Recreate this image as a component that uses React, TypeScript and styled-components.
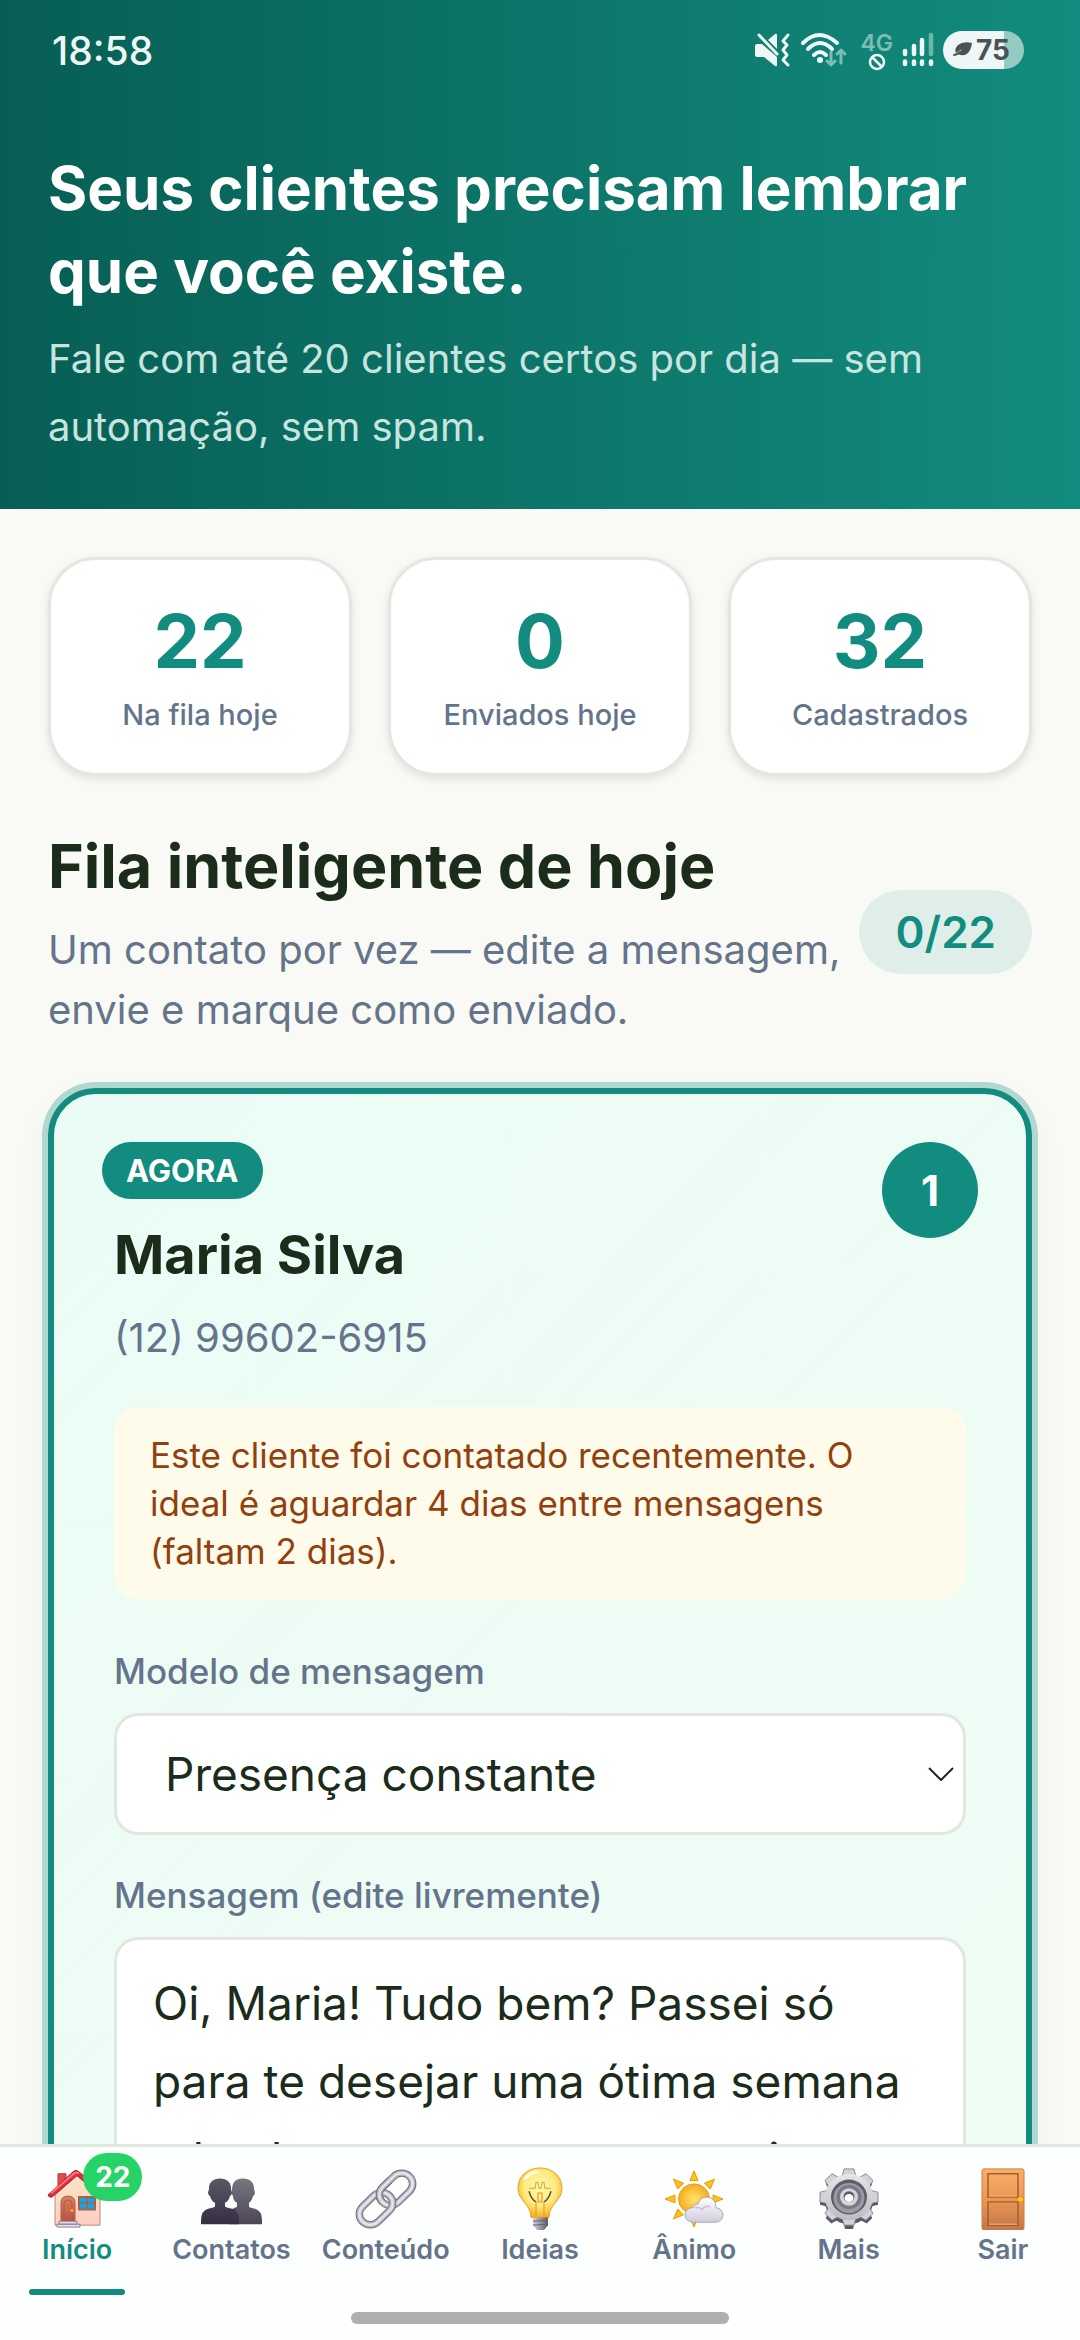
import { useState } from 'react'
import styled, { createGlobalStyle } from 'styled-components'

const GlobalStyle = createGlobalStyle`
    * {
        box-sizing: border-box;
    }

    body {
        margin: 0;
        background: #f9faf5;
        color: #1b2c1b;
        font-family: Inter, Roboto, "Liberation Sans", sans-serif;
        font-size: 40px;
    }

    h1, h2, h3, p {
        margin: 0;
    }
`

const STATS = [
    { value: '22', label: 'Na fila hoje' },
    { value: '0', label: 'Enviados hoje' },
    { value: '32', label: 'Cadastrados' },
]

const TABS = [
    { label: 'Início', icon: <HouseIcon />, active: true, badge: 22 },
    { label: 'Contatos', icon: <PeopleIcon /> },
    { label: 'Conteúdo', icon: <LinkIcon /> },
    { label: 'Ideias', icon: <BulbIcon /> },
    { label: 'Ânimo', icon: <SunIcon /> },
    { label: 'Mais', icon: <GearIcon /> },
    { label: 'Sair', icon: <DoorIcon /> },
]

const App = () => {
    const [message, setMessage] = useState(
        'Oi, Maria! Tudo bem? Passei só para te desejar uma ótima semana e lembrar que estou por aqui.'
    )

    return (
        <Screen>
            <GlobalStyle />
            <Scroll>
                <Header>
                    <StatusBar>
                        <Clock>18:58</Clock>
                        <StatusIcons />
                    </StatusBar>
                    <Title>Seus clientes precisam lembrar que você existe.</Title>
                    <Subtitle>Fale com até 20 clientes certos por dia — sem automação, sem spam.</Subtitle>
                </Header>
                <Main>
                    <Stats>
                        {STATS.map((stat) => (
                            <StatCard key={stat.label}>
                                <StatValue>{stat.value}</StatValue>
                                <StatLabel>{stat.label}</StatLabel>
                            </StatCard>
                        ))}
                    </Stats>
                    <QueueHeader>
                        <QueueText>
                            <QueueTitle>Fila inteligente de hoje</QueueTitle>
                            <QueueHint>Um contato por vez — edite a mensagem, envie e marque como enviado.</QueueHint>
                        </QueueText>
                        <Progress>0/22</Progress>
                    </QueueHeader>
                    <ContactCard>
                        <CardTop>
                            <div>
                                <NowBadge>AGORA</NowBadge>
                                <ContactName>Maria Silva</ContactName>
                                <ContactPhone>(12) 99602-6915</ContactPhone>
                            </div>
                            <Position>1</Position>
                        </CardTop>
                        <CardBody>
                            <Warning>
                                Este cliente foi contatado recentemente. O ideal é aguardar 4 dias entre mensagens (faltam 2 dias).
                            </Warning>
                            <Label htmlFor="modelo">Modelo de mensagem</Label>
                            <SelectWrapper>
                                <Select id="modelo">
                                    <option>Presença constante</option>
                                </Select>
                                <Chevron viewBox="0 0 26 14">
                                    <path d="M1 1L13 13L25 1" fill="none" stroke="#1b2c1b" strokeWidth="2" />
                                </Chevron>
                            </SelectWrapper>
                            <Label htmlFor="mensagem">Mensagem (edite livremente)</Label>
                            <Message id="mensagem" value={message} onChange={(e) => setMessage(e.target.value)} />
                        </CardBody>
                    </ContactCard>
                </Main>
            </Scroll>
            <BottomNav>
                <Tabs>
                    {TABS.map((tab) => (
                        <Tab key={tab.label} href="#" $active={tab.active}>
                            <IconBox>
                                {tab.icon}
                                {tab.badge && <Badge>{tab.badge}</Badge>}
                            </IconBox>
                            <TabLabel>{tab.label}</TabLabel>
                            <TabLine $active={tab.active} />
                        </Tab>
                    ))}
                </Tabs>
                <HomeHandle />
            </BottomNav>
        </Screen>
    )
}

export default App

function StatusIcons() {
    return (
        <StatusGroup>
            <svg width="36" height="36" viewBox="0 0 36 36">
                <path d="M2 12H7L22 25V33Q22 35 20 34L9 25H2Q0 25 0 23V14Q0 12 2 12Z" fill="#eef7f5" />
                <path d="M13 8L20 2Q22 1 22 3V17Z" fill="#eef7f5" />
                <path d="M4 3L22 22" stroke="#eef7f5" strokeWidth="3" strokeLinecap="round" />
                <path d="M33 3L28 9L32 13L28 18L32 23L28 28L33 33" fill="none" stroke="#eef7f5" strokeWidth="3" strokeLinecap="round" strokeLinejoin="round" />
            </svg>
            <svg width="48" height="36" viewBox="0 0 48 36">
                <g fill="none" stroke="#eef7f5" strokeWidth="4" strokeLinecap="round">
                    <path d="M3 11Q19 -5 37 11" />
                    <path d="M8 17Q20 5 32 17" />
                    <path d="M14 23Q20 17 26 23" />
                </g>
                <circle cx="20" cy="28" r="3" fill="#eef7f5" />
                <g fill="none" stroke="#7dbcb2" strokeWidth="3" strokeLinecap="round" strokeLinejoin="round">
                    <path d="M31 20V33M27 29L31 33L35 29" />
                    <path d="M41 31V18M37 22L41 18L45 22" />
                </g>
            </svg>
            <Network>
                4G
                <svg width="18" height="18" viewBox="0 0 18 18">
                    <circle cx="9" cy="9" r="7" fill="none" stroke="#eef7f5" strokeWidth="2.5" />
                    <path d="M4 4L14 14" stroke="#eef7f5" strokeWidth="2.5" />
                </svg>
            </Network>
            <svg width="32" height="36" viewBox="0 0 32 36">
                <g stroke="#eef7f5" strokeWidth="4.5" strokeLinecap="round">
                    <path d="M3 19V22M12 14V22M20 8V22" />
                    <path d="M29 3V22" stroke="#6db5aa" />
                    <path d="M3 29.500V32M12 29.500V32M20 29.500V32M29 29.500V32" />
                </g>
            </svg>
            <Battery>
                <svg width="20" height="16" viewBox="0 0 20 16">
                    <path d="M19 1Q10 -1 5 3Q1 7 3 11L9 7L5 12Q11 15 15 11Q18 8 19 1Z" fill="#4a5253" />
                    <path d="M1 13Q4 13 7 10" fill="none" stroke="#4a5253" strokeWidth="2" strokeLinecap="round" />
                </svg>
                75
            </Battery>
        </StatusGroup>
    )
}

function HouseIcon() {
    return (
        <TabIcon viewBox="0 0 64 66" preserveAspectRatio="none">
            <defs>
                <linearGradient id="wall" x2="0" y2="1">
                    <stop stopColor="#f7e4c8" />
                    <stop offset="1" stopColor="#ffcfc0" />
                </linearGradient>
                <linearGradient id="door" x2="0" y2="1">
                    <stop stopColor="#d98262" />
                    <stop offset="1" stopColor="#b9533f" />
                </linearGradient>
            </defs>
            <path d="M13 8H21V24H13Z" fill="#e84850" stroke="#b3333a" />
            <path d="M10 30L32 9L55 30V61H10Z" fill="url(#wall)" stroke="#b98a72" />
            <path d="M3 30Q4 33 7 32L32 10L57 32Q60 33 61 30L34 6Q31 3 28 6Z" fill="#e02f3b" stroke="#a81f29" strokeLinejoin="round" />
            <path d="M6 28L30 7L34 7" fill="none" stroke="#ff7379" strokeWidth="2" />
            <path d="M16 57V38Q16 31 23 31Q30 31 30 38V57Z" fill="url(#door)" stroke="#a7604b" />
            <path d="M19 55V39Q19 35 23 35Q27 35 27 39V55Z" fill="none" stroke="#b9533f" />
            <circle cx="27" cy="46" r="1.5" fill="#ffb52e" />
            <path d="M34 32H50V45H34Z" fill="#16a5dc" stroke="#a7604b" strokeWidth="2" />
            <path d="M42 32V45M34 38H50" stroke="#a7604b" strokeWidth="1.5" />
            <path d="M14 57H32V60H14ZM12 60H35V63H12Z" fill="#e6e0ee" stroke="#8f7d94" />
        </TabIcon>
    )
}

function PeopleIcon() {
    return (
        <TabIcon viewBox="0 0 64 66" preserveAspectRatio="none">
            <defs>
                <linearGradient id="back" x2="0" y2="1">
                    <stop stopColor="#77777f" />
                    <stop offset="1" stopColor="#4c4558" />
                </linearGradient>
                <linearGradient id="front" x2="0" y2="1">
                    <stop stopColor="#5a5864" />
                    <stop offset="1" stopColor="#352e43" />
                </linearGradient>
            </defs>
            <path
                d="M44 13C51 13 55 17 55 23Q55 25 56 27Q56 30 54 31Q53 36 50 38V42Q51 43 56 44Q63 46 63 56V60H30V46L38 42V38Q34 36 34 31Q32 29 33 26C33 17 36 13 44 13Z"
                fill="url(#back)"
            />
            <path
                d="M21 13C28 13 32 17 32 23Q32 25 33 27Q33 30 31 31Q30 36 26 38V42Q28 43 33 44Q40 46 40 56V60H2V56Q2 46 9 44Q14 43 16 42V38Q12 36 11 31Q9 30 9 27Q10 25 10 23C10 17 14 13 21 13Z"
                fill="url(#front)"
            />
        </TabIcon>
    )
}

function LinkIcon() {
    const ring = 'M-11 -8A11 11 0 0 1 11 -8V8A11 11 0 0 1 -11 8Z'
    const overlap = 'M-11 -2V8A11 11 0 0 0 -3 18.600'
    const layers = [
        { stroke: '#70707c', strokeWidth: 7.5 },
        { stroke: '#b4b4c0', strokeWidth: 5.5 },
        { stroke: '#e6e6ec', strokeWidth: 2.5 },
    ]

    return (
        <TabIcon viewBox="0 0 64 66" preserveAspectRatio="none">
            <g fill="none">
                <g transform="translate(42 24) rotate(45)">
                    {layers.map((layer) => (
                        <path key={layer.stroke} d={ring} {...layer} />
                    ))}
                </g>
                <g transform="translate(22 44) rotate(45)">
                    {layers.map((layer) => (
                        <path key={layer.stroke} d={ring} {...layer} />
                    ))}
                </g>
                <g transform="translate(42 24) rotate(45)">
                    {layers.map((layer) => (
                        <path key={layer.stroke} d={overlap} {...layer} />
                    ))}
                </g>
            </g>
        </TabIcon>
    )
}

function BulbIcon() {
    return (
        <TabIcon viewBox="0 0 64 66" preserveAspectRatio="none">
            <defs>
                <radialGradient id="glass" cx="0.5" cy="0.4" r="0.6">
                    <stop stopColor="#fff9b0" />
                    <stop offset="0.6" stopColor="#ffea80" />
                    <stop offset="1" stopColor="#f7ae18" />
                </radialGradient>
                <linearGradient id="socket">
                    <stop stopColor="#d5d3dc" />
                    <stop offset="1" stopColor="#5b5867" />
                </linearGradient>
            </defs>
            <path d="M32 2C45 2 54 11 54 23C54 36 41 39 41 53H23C23 39 10 36 10 23C10 11 19 2 32 2Z" fill="url(#glass)" stroke="#ed9c16" />
            <path d="M21 26Q23 34 28 37M43 26Q41 34 36 37" fill="none" stroke="#5f5738" strokeWidth="1.5" />
            <path d="M28 37V52M36 37V52M30 28H34V37H30Z" fill="none" stroke="#e0a52a" strokeWidth="1.3" />
            <path d="M21 23H27L28 17H30L31 23L33 23L34 17H36L37 23H43" fill="none" stroke="#dcb84a" strokeWidth="1.3" />
            <path d="M17 13Q22 7 29 6" stroke="#fffce0" strokeWidth="3" strokeLinecap="round" fill="none" />
            <path d="M25 53H40V61L36 66H29L25 61Z" fill="url(#socket)" />
            <path d="M25 57L40 56M25 61L40 60" stroke="#656270" />
        </TabIcon>
    )
}

function SunIcon() {
    return (
        <TabIcon viewBox="0 0 64 66" preserveAspectRatio="none">
            <defs>
                <radialGradient id="sun">
                    <stop stopColor="#ffe36e" />
                    <stop offset="1" stopColor="#f5ac1e" />
                </radialGradient>
                <linearGradient id="cloud" x2="0" y2="1">
                    <stop stopColor="#fff" />
                    <stop offset="1" stopColor="#cfcddd" />
                </linearGradient>
            </defs>
            <g fill="#ffc30f" stroke="#e79a0b">
                {[0, 45, 90, 180, 225, 270, 315].map((angle) => (
                    <path key={angle} d="M32 5L36 15H28Z" transform={`rotate(${angle} 32 34)`} strokeLinejoin="round" />
                ))}
            </g>
            <circle cx="32" cy="34" r="15.5" fill="url(#sun)" stroke="#ee9c15" />
            <path d="M31 58Q23 57 23 50Q24 43 31 43Q32 39 36 39Q38 32 45 32Q54 33 54 43Q61 44 61 51Q60 58 53 58Z" fill="url(#cloud)" stroke="#a9a6bc" />
            <path d="M33 43Q38 42 40 45Q43 40 48 42" fill="none" stroke="#c3c1d2" strokeWidth="1.5" />
        </TabIcon>
    )
}

function GearIcon() {
    const teeth = [0, 45, 90, 135, 180, 225, 270, 315]

    return (
        <TabIcon viewBox="0 0 64 66" preserveAspectRatio="none">
            <defs>
                <linearGradient id="gear" x2="0" y2="1">
                    <stop stopColor="#e6e6e8" />
                    <stop offset="1" stopColor="#bdbbc5" />
                </linearGradient>
            </defs>
            <g fill="#5b5866">
                <circle cx="32" cy="36" r="24" />
                {teeth.map((angle) => (
                    <path key={angle} d="M26 15L28 7H36L38 15Z" transform={`rotate(${angle} 32 36)`} />
                ))}
            </g>
            <g fill="#d2d2d7" stroke="#77757f" strokeWidth="0.8" strokeLinejoin="round">
                {teeth.map((angle) => (
                    <path key={angle} d="M25 11L27 3H37L39 11Z" transform={`rotate(${angle} 32 32)`} />
                ))}
            </g>
            <circle cx="32" cy="32" r="24" fill="url(#gear)" />
            <circle cx="32" cy="32" r="18" fill="#5d5e68" />
            <circle cx="32" cy="33" r="15.5" fill="#9a9ba5" />
            <circle cx="32" cy="32" r="12.5" fill="#777984" />
            <circle cx="32" cy="32" r="9" fill="#d4d4d9" />
            <circle cx="32" cy="31.5" r="5.5" fill="#5b5c65" />
            <ellipse cx="32" cy="33" rx="4.5" ry="4" fill="#fff" />
        </TabIcon>
    )
}

function DoorIcon() {
    return (
        <TabIcon viewBox="0 0 64 66" preserveAspectRatio="none">
            <defs>
                <linearGradient id="wood" x2="0" y2="1">
                    <stop stopColor="#f9ae6b" />
                    <stop offset="0.5" stopColor="#eb9754" />
                    <stop offset="1" stopColor="#c3764b" />
                </linearGradient>
            </defs>
            <rect x="11" y="3" width="42" height="63" rx="2" fill="url(#wood)" stroke="#c97c45" />
            <path d="M17 8H47V32H17ZM17 37H47V61H17Z" fill="none" stroke="#a45f28" strokeWidth="1.5" />
            <path d="M18 31H46M18 60H46" stroke="#ffb982" />
            <circle cx="49.5" cy="34.5" r="3" fill="#ffc629" stroke="#d68d12" />
        </TabIcon>
    )
}

const Screen = styled.div`
    display: flex;
    flex-direction: column;
    height: 100vh;
`

const Scroll = styled.div`
    flex: 1;
    min-height: 0;
    overflow-y: auto;
    scrollbar-width: none;
`

const Header = styled.header`
    padding: 0 48px 48px;
    background: linear-gradient(90deg, #075e54, #128c7e);
    color: #ffffff;
`

const StatusBar = styled.div`
    display: flex;
    align-items: center;
    justify-content: space-between;
    height: 100px;
    margin-bottom: 47px;
    padding: 0 8px 0 4px;
    color: #eef7f5;
`

const Clock = styled.time`
    font-size: 39px;
    font-weight: 500;
`

const StatusGroup = styled.div`
    display: flex;
    align-items: center;
    gap: 9px;
`

const Network = styled.div`
    display: flex;
    flex-direction: column;
    align-items: center;
    margin-left: 4px;
    padding-top: 4px;
    color: #7dbcb2;
    font-size: 23px;
    font-weight: 600;
    line-height: 20px;
`

const Battery = styled.div`
    display: flex;
    align-items: center;
    gap: 3px;
    height: 38px;
    padding: 0 14px 0 10px;
    border-radius: 19px;
    background: linear-gradient(90deg, #eef7f5 75%, #94cbc3 75%);
    color: #4a5253;
    font-size: 28px;
    font-weight: 700;
`

const Title = styled.h1`
    font-size: 60px;
    font-weight: 700;
    line-height: 83px;
`

const Subtitle = styled.p`
    margin-top: 12px;
    color: #c8e4df;
    line-height: 68px;
`

const Main = styled.main`
    padding: 48px;
`

const Stats = styled.section`
    display: grid;
    grid-template-columns: repeat(3, 1fr);
    gap: 36px;
`

const StatCard = styled.div`
    padding: 36px 12px;
    border: 3px solid #e2e8e0;
    border-radius: 48px;
    background: #ffffff;
    box-shadow: 0 3px 9px rgba(0, 0, 0, 0.1);
    text-align: center;
`

const StatValue = styled.div`
    color: #128c7e;
    font-size: 74px;
    font-weight: 700;
    line-height: 90px;
`

const StatLabel = styled.div`
    margin-top: 6px;
    color: #64748b;
    font-size: 29px;
    font-weight: 500;
    line-height: 45px;
`

const QueueHeader = styled.div`
    display: flex;
    align-items: center;
    justify-content: space-between;
    margin: 48px 0;
`

const QueueText = styled.div`
    flex: 1;
`

const QueueTitle = styled.h2`
    font-size: 61px;
    font-weight: 700;
    line-height: 84px;
`

const QueueHint = styled.p`
    margin-top: 12px;
    color: #64748b;
    line-height: 60px;
`

const Progress = styled.span`
    padding: 12px 36px;
    border-radius: 42px;
    background: #e0eee9;
    color: #128c7e;
    font-size: 44px;
    font-weight: 600;
    line-height: 60px;
`

const ContactCard = styled.article`
    padding: 48px;
    border: 6px solid #128c7e;
    border-radius: 48px;
    background: linear-gradient(135deg, #ebfcf6, #effdf4);
    box-shadow: 0 0 0 6px #b0d8d0, 0 12px 36px rgba(0, 0, 0, 0.06);
`

const CardTop = styled.div`
    display: flex;
    align-items: flex-start;
    justify-content: space-between;
`

const NowBadge = styled.span`
    display: block;
    width: fit-content;
    padding: 6px 24px;
    border-radius: 29px;
    background: #128c7e;
    color: #ffffff;
    font-size: 31px;
    font-weight: 700;
    line-height: 45px;
`

const ContactName = styled.h3`
    margin: 18px 12px 0;
    font-size: 54px;
    font-weight: 700;
    line-height: 76px;
`

const ContactPhone = styled.p`
    margin: 12px 12px 0;
    color: #64748b;
    line-height: 66px;
`

const Position = styled.span`
    display: flex;
    align-items: center;
    justify-content: center;
    width: 96px;
    height: 96px;
    border-radius: 50%;
    background: #128c7e;
    color: #ffffff;
    font-size: 42px;
    font-weight: 700;
`

const CardBody = styled.div`
    padding: 36px 12px 0;
`

const Warning = styled.p`
    margin-bottom: 48px;
    padding: 24px 36px;
    border-radius: 24px;
    background: #fffbeb;
    color: #92400e;
    font-size: 35px;
    line-height: 48px;
`

const Label = styled.label`
    display: block;
    margin-bottom: 18px;
    color: #64748b;
    font-size: 35px;
    font-weight: 500;
    line-height: 48px;
`

const SelectWrapper = styled.div`
    position: relative;
    margin-bottom: 36px;
`

const Select = styled.select`
    display: block;
    width: 100%;
    height: 122px;
    padding: 0 48px;
    appearance: none;
    border: 3px solid #e2e8e0;
    border-radius: 24px;
    background: #ffffff;
    color: inherit;
    font-family: inherit;
    font-size: 46px;
`

const Chevron = styled.svg`
    position: absolute;
    top: 54px;
    right: 12px;
    width: 26px;
    height: 14px;
    pointer-events: none;
`

const Message = styled.textarea`
    display: block;
    width: 100%;
    height: 420px;
    padding: 24px 36px;
    border: 3px solid #e2e8e0;
    border-radius: 24px;
    background: #ffffff;
    color: inherit;
    font-family: inherit;
    font-size: 46px;
    line-height: 78px;
    resize: none;
`

const BottomNav = styled.nav`
    padding-bottom: 16px;
    border-top: 3px solid #e2e8e0;
    background: #fdfefe;
`

const Tabs = styled.div`
    display: grid;
    grid-template-columns: repeat(7, 1fr);
`

const Tab = styled.a<{ $active?: boolean }>`
    display: flex;
    flex-direction: column;
    align-items: center;
    padding-top: 19px;
    color: ${({ $active }) => ($active ? '#128c7e' : '#64748b')};
    text-decoration: none;
`

const IconBox = styled.span`
    position: relative;
    display: flex;
`

const TabIcon = styled.svg`
    width: 64px;
    height: 64px;
`

const Badge = styled.span`
    position: absolute;
    top: -13px;
    left: 38px;
    padding: 0 12px;
    border-radius: 24px;
    background: #25d366;
    color: #ffffff;
    font-size: 28px;
    font-weight: 700;
    line-height: 48px;
`

const TabLabel = styled.span`
    margin-top: 2px;
    font-size: 27px;
    font-weight: 600;
    line-height: 36px;
`

const TabLine = styled.span<{ $active?: boolean }>`
    width: 96px;
    height: 6px;
    margin-top: 21px;
    border-radius: 3px;
    background: ${({ $active }) => ($active ? '#128c7e' : 'transparent')};
`

const HomeHandle = styled.div`
    width: 35%;
    height: 12px;
    margin: 17px auto 0;
    border-radius: 6px;
    background: #aeb0af;
`
